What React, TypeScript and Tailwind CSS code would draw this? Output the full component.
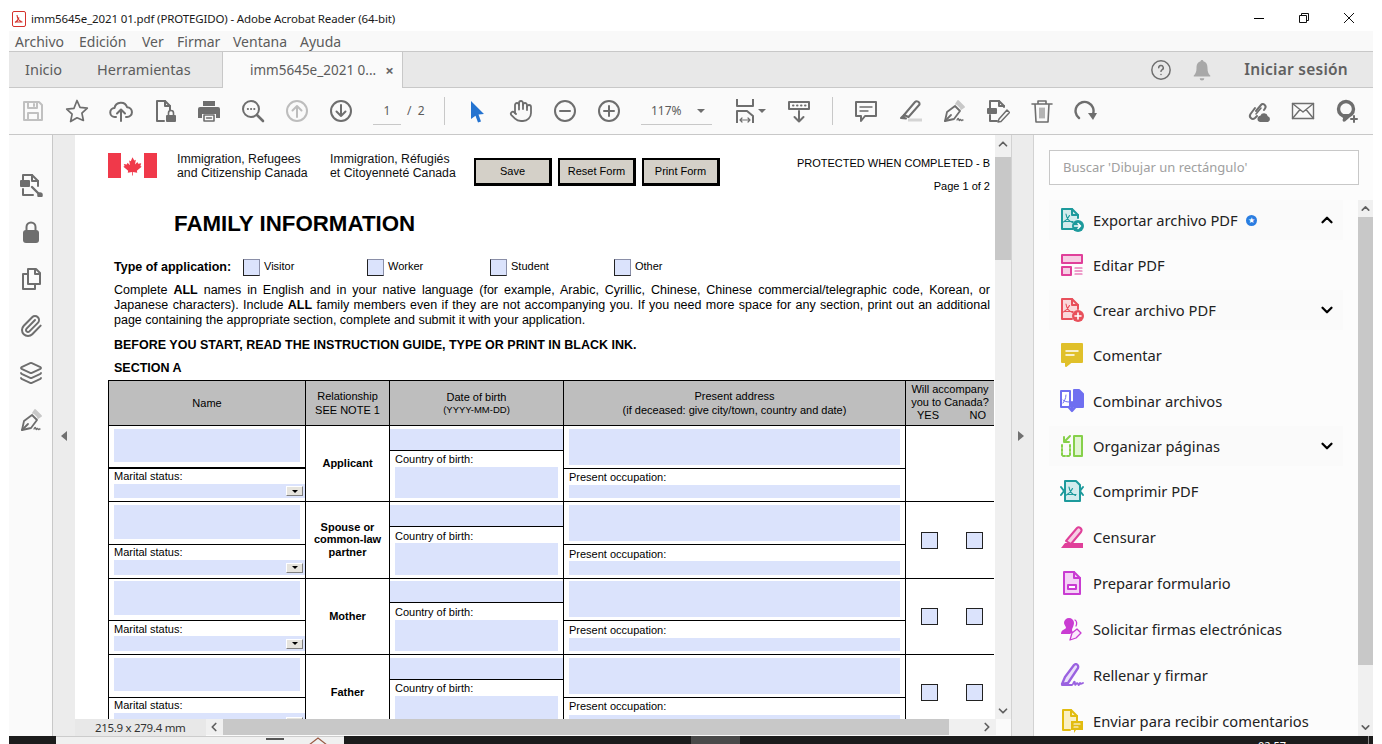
import type { ReactNode } from "react";
import { ChevronDown, ChevronLeft, ChevronRight, ChevronUp, Hand, Layers, Paperclip } from "lucide-react";

function Ic({ children, className = "w-6 h-6 text-[#6e6e6e]", sw = 2 }: { children: ReactNode; className?: string; sw?: number }) {
  return (
    <svg viewBox="0 0 24 24" fill="none" stroke="currentColor" strokeWidth={sw} strokeLinecap="round" strokeLinejoin="round" className={className}>
      {children}
    </svg>
  );
}

const swoosh = "M9 8c.5 4 2.500 7 6.500 8.500M6.500 16c2.500-1.500 5-4 6-6.500M7 15.500h9";

const toolbarLeft: ReactNode[] = [
  <Ic className="w-6 h-6 text-[#c0c0c0]"><path d="M3 3h15l3 3v15H3z" /><path d="M7 3v6h9V3M13 5v2M7 21v-7h10v7" /></Ic>,
  <Ic sw={1.7}><path d="M12 1.500l3 6.800 7.300.8-5.400 5 1.500 7.400L12 18.800l-6.400 3.700 1.500-7.400-5.400-5 7.300-.8z" /></Ic>,
  <Ic><path d="M7 18H6a4.500 4.500 0 0 1-.5-9 6.500 6.500 0 0 1 12.600-.8A4.800 4.800 0 0 1 18 18h-1" /><path d="M12 22V11M8 14.500l4-4 4 4" /></Ic>,
  <Ic>
    <path d="M11 22H4V2h8l5 5v4" />
    <path d="M12 2v5h5" />
    <rect x="13" y="16" width="10" height="7" rx="1" fill="currentColor" stroke="none" />
    <path d="M15.500 16v-2a2.500 2.500 0 0 1 5 0v2" strokeWidth={1.6} />
  </Ic>,
  <Ic>
    <path fill="currentColor" stroke="none" d="M6 2h12v5H6zM3 8h18a2 2 0 0 1 2 2v9h-4v-4H5v4H1v-9a2 2 0 0 1 2-2z" />
    <path d="M7 16h10v6H7z" strokeWidth={1.6} />
    <path d="M9.500 19h5" strokeWidth={1.4} />
  </Ic>,
  <Ic>
    <circle cx="10" cy="10" r="8" />
    <path d="M16 16l6 6" strokeWidth={2.6} />
    <path d="M6.800 10h.2M10 10h.2M13.200 10h.2" />
  </Ic>,
  <Ic className="w-6 h-6 text-[#bdbdbd]"><circle cx="12" cy="12" r="10" /><path d="M12 18V7M7.500 11.500 12 7l4.500 4.500" /></Ic>,
  <Ic><circle cx="12" cy="12" r="10" /><path d="M12 6v11M7.500 12.500 12 17l4.500-4.500" /></Ic>,
];

const toolbarEdit: ReactNode[] = [
  <Ic><path d="M2 3h20v14H11l-4 5v-5H2z" /><path d="M6 8h12M6 12h8" strokeWidth={1.4} /></Ic>,
  <Ic>
    <path d="M6 16 17 3c1.500-1.500 5-.5 4.500 2.500L10.500 18z" />
    <path d="M6 16l-3 3 5 .5" fill="currentColor" />
    <path d="M10 21h14" stroke="#d4d4d4" strokeWidth={3} strokeLinecap="butt" />
  </Ic>,
  <Ic sw={1.8}>
    <path d="M3 22l2-9 8-6 5 5-6 8z" />
    <path d="M3 22l6-6" />
    <path d="M14 5l2-3 6 6-3 2" fill="#c8c8c8" stroke="#c8c8c8" />
    <path d="M15 21c1-2 1.500-2 2 0s1-2 2 0 1-1 2 0" strokeWidth={1.3} />
  </Ic>,
  <Ic>
    <path d="M4 9V2h9l5 5v1" />
    <path d="M13 2v5h5" />
    <path d="M4 16v6h7" />
    <rect x="1" y="9" width="10" height="6" rx="1" fill="currentColor" stroke="none" />
    <path d="M13 20l8-9 2.500 2.500-8.500 9-3 .5z" strokeWidth={1.5} />
  </Ic>,
  <Ic sw={1.6}>
    <path d="M2 5h20M8 5V2h8v3M5 5l1 18h12l1-18" />
    <path d="M10 9v10M12 9v10M14 9v10" strokeWidth={1} />
  </Ic>,
  <Ic>
    <path d="M5 19A9 9 0 1 1 19 15" strokeWidth={2.400} />
    <path d="M14 14h9l-4 7z" fill="currentColor" stroke="none" />
  </Ic>,
];

const railIcons: ReactNode[] = [
  <Ic>
    <path d="M4 8V2h9l6 6v5" />
    <path d="M13 2v6h6" />
    <path d="M4 16v6h10" />
    <rect x="1" y="7" width="10" height="7" rx="1" fill="currentColor" stroke="none" />
    <path d="M13 14l7 7" strokeWidth={2.400} />
    <circle cx="21" cy="22" r="1.800" fill="currentColor" />
  </Ic>,
  <Ic>
    <path d="M7.500 11V7a4.500 4.500 0 0 1 9 0v4" strokeWidth={2} />
    <rect x="4" y="10" width="16" height="13" rx="3" fill="currentColor" stroke="none" />
  </Ic>,
  <Ic>
    <path d="M9 17V2h8l4 4v11z" />
    <path d="M16 2v5h5" />
    <path d="M9 7H4v15h12v-5" />
  </Ic>,
  <Paperclip className="w-6 h-6 text-[#6e6e6e]" strokeWidth={2} />,
  <Layers className="w-6 h-6 text-[#6e6e6e]" strokeWidth={1.800} />,
  <Ic sw={1.8}>
    <path d="M3 22l2-9 8-6 5 5-6 8z" />
    <path d="M3 22l6-6" />
    <path d="M14 5l2-3 6 6-3 2" fill="#c8c8c8" stroke="#c8c8c8" />
    <path d="M15 21c1-2 1.500-2 2 0s1-2 2 0 1-1 2 0" strokeWidth={1.3} />
  </Ic>,
];

type Tool = { label: string; icon: ReactNode; h: string; chevron?: "up" | "down"; badge?: boolean };

const tools: Tool[] = [
  {
    label: "Exportar archivo PDF",
    h: "h-[45px]",
    chevron: "up",
    badge: true,
    icon: (
      <Ic className="w-6 h-6 text-[#1d9a9c]">
        <path d="M13 21H2V1h10l6 6v3" fill="#d3eced" />
        <path d="M12 1v6h6" />
        <path d={swoosh} strokeWidth={1.1} transform="translate(-3 -2)" />
        <circle cx="18" cy="18" r="6" fill="currentColor" stroke="none" />
        <path d="M14.500 18h6M18 15.500l2.500 2.500-2.500 2.500" stroke="#fff" strokeWidth={1.5} />
      </Ic>
    ),
  },
  {
    label: "Editar PDF",
    h: "h-[45px]",
    icon: (
      <Ic className="w-6 h-6 text-[#e0409a]">
        <path d="M2 2h20v8H2z" fill="#f6cfe4" />
        <path d="M2 14h9v8H2z" fill="#f6cfe4" />
        <path d="M15 15h7M15 18h7M15 21h7" strokeWidth={1.200} />
      </Ic>
    ),
  },
  {
    label: "Crear archivo PDF",
    h: "h-[45px]",
    chevron: "down",
    icon: (
      <Ic className="w-6 h-6 text-[#e8505b]">
        <path d="M12 21H2V1h10l6 6v4" fill="#fad9db" />
        <path d="M12 1v6h6" />
        <path d={swoosh} strokeWidth={1.1} transform="translate(-3 -2)" />
        <circle cx="18" cy="18" r="6" fill="currentColor" stroke="none" />
        <path d="M18 15v6M15 18h6" stroke="#fff" strokeWidth={1.6} />
      </Ic>
    ),
  },
  {
    label: "Comentar",
    h: "h-[46px]",
    icon: (
      <Ic className="w-6 h-6 text-[#e0c02a]">
        <path d="M2 1h20v18H11l-5 4v-4H2z" fill="currentColor" />
        <path d="M6 8h12M6 12h8" stroke="#fff" strokeWidth={1.500} />
      </Ic>
    ),
  },
  {
    label: "Combinar archivos",
    h: "h-[45px]",
    icon: (
      <Ic className="w-6 h-6 text-[#6f6ff0]">
        <path d="M1 2h9l0 16H1z" fill="#fff" />
        <path d="M14 1h5l4 4v13h-9z" fill="currentColor" />
        <path d="M3 14c1-2 3-4 3-8M3 11c1 1 3 2 6 2" strokeWidth={1} />
        <path d="M12 13v8M8.500 18l3.500 4 3.500-4" strokeWidth={2.200} />
      </Ic>
    ),
  },
  {
    label: "Organizar páginas",
    h: "h-[45px]",
    chevron: "down",
    icon: (
      <Ic className="w-6 h-6 text-[#86d04a]">
        <path d="M14 2h8v20h-8z" fill="#e2f5d3" />
        <path d="M2 11v11h8V11" strokeDasharray="2 2" />
        <path d="M10 2 4 8M4 3v5h5" />
      </Ic>
    ),
  },
  {
    label: "Comprimir PDF",
    h: "h-[46px]",
    icon: (
      <Ic className="w-6 h-6 text-[#1d9a9c]">
        <path d="M5 2h11l4 4v16H5z" fill="#d3eced" />
        <path d="M1 8l3 4-3 4M23 8l-3 4 3 4" fill="#fff" />
        <path d={swoosh} strokeWidth={1.200} />
      </Ic>
    ),
  },
  {
    label: "Censurar",
    h: "h-[46px]",
    icon: (
      <Ic className="w-6 h-6 text-[#e0409a]">
        <path d="M6 16 17 3c2-2 6 1 4 4L11 19z" fill="#f6cfe4" />
        <path d="M1 23l4-5h18v5z" fill="currentColor" stroke="none" />
      </Ic>
    ),
  },
  {
    label: "Preparar formulario",
    h: "h-[46px]",
    icon: (
      <Ic className="w-6 h-6 text-[#c93cd2]">
        <path d="M4 1h10l6 6v16H4z" fill="#f4d3f6" />
        <path d="M14 1v6h6" />
        <path d="M8 14h8v4H8z" fill="#fff" />
      </Ic>
    ),
  },
  {
    label: "Solicitar firmas electrónicas",
    h: "h-[46px]",
    icon: (
      <Ic className="w-6 h-6 text-[#c93cd2]">
        <path fill="currentColor" stroke="none" d="M9 1a5 5 0 0 1 5 5c0 3-2 5-2 7 0 1 1 2 1 2l-3 2H1c0-4 3-4 5-6 0-2-2-3-2-5a5 5 0 0 1 5-5z" />
        <path d="M10 23l2-7 5-4 4 4-5 5z" strokeWidth={1.300} fill="#fbeafc" />
        <path d="M15 3c2 1 2 4 1 6" strokeWidth={1.300} />
      </Ic>
    ),
  },
  {
    label: "Rellenar y firmar",
    h: "h-[46px]",
    icon: (
      <Ic className="w-6 h-6 text-[#9a62e0]" sw={2.300}>
        <path d="M2 21 5 14 14 2c2-2 5 0 4 3L8 20z" fill="#eadffa" />
        <path d="M2 22h10M13 21c1-3 2-3 2 0s2-3 3 0 2-2 2-1 1 1 3 0" strokeWidth={1.800} />
      </Ic>
    ),
  },
  {
    label: "Enviar para recibir comentarios",
    h: "h-[46px]",
    icon: (
      <Ic className="w-6 h-6 text-[#e2bc10]">
        <path d="M10 21H3V1h8l6 6v5" fill="#faf0c4" />
        <path d="M11 1v6h6" />
        <path d="M11 12h12v9h-7l-2 3v-3h-3z" fill="currentColor" stroke="none" />
        <path d="M14 15h6M14 18h4" stroke="#fff" strokeWidth={1.200} />
      </Ic>
    ),
  },
];

type RowData = {
  label: string[];
  h: string;
  pt: string;
  nameTop: string;
  nameField: string;
  nameLine: string;
  maritalPt: string;
  nameLow: string;
  dobTop: string;
  dobLabel: string;
  dobField: string;
  addrTop: string;
  addrLabel: string;
  addrField: string;
  labelPt: string;
  boxes: string | null;
};

const rows: RowData[] = [
  { label: ["Applicant"], h: "h-[76px]", pt: "pt-[3px]", nameTop: "h-[43px]", nameField: "h-[33px]", nameLine: "border-b-2", maritalPt: "pt-[1px]", nameLow: "h-[14px]", dobTop: "h-[25px]", dobLabel: "h-[16px]", dobField: "h-[31px]", addrTop: "h-[43px]", addrLabel: "h-[16px]", addrField: "h-[13px]", labelPt: "pt-[2px]", boxes: null },
  { label: ["Spouse or", "common-law", "partner"], h: "h-[77px]", pt: "pt-[3px]", nameTop: "h-[43px]", nameField: "h-[34px]", nameLine: "border-b", maritalPt: "pt-[1px]", nameLow: "h-[15px]", dobTop: "h-[25px]", dobLabel: "h-[16px]", dobField: "h-[32px]", addrTop: "h-[43px]", addrLabel: "h-[16px]", addrField: "h-[14px]", labelPt: "pt-[3px]", boxes: "pt-[30px]" },
  { label: ["Mother"], h: "h-[76px]", pt: "pt-[2px]", nameTop: "h-[42px]", nameField: "h-[34px]", nameLine: "border-b", maritalPt: "pt-[2px]", nameLow: "h-[15px]", dobTop: "h-[24px]", dobLabel: "h-[17px]", dobField: "h-[31px]", addrTop: "h-[42px]", addrLabel: "h-[17px]", addrField: "h-[13px]", labelPt: "pt-[3px]", boxes: "pt-[29px]" },
  { label: ["Father"], h: "h-[76px]", pt: "pt-[3px]", nameTop: "h-[43px]", nameField: "h-[33px]", nameLine: "border-b", maritalPt: "pt-[1px]", nameLow: "h-[18px]", dobTop: "h-[25px]", dobLabel: "h-[16px]", dobField: "h-[30px]", addrTop: "h-[43px]", addrLabel: "h-[17px]", addrField: "h-[16px]", labelPt: "pt-[2px]", boxes: "pt-[29px]" },
];

function Box() {
  return <div className="w-[17px] h-[17px] bg-[#dbe3fc] border border-[#222]" />;
}

function TableRow({ row }: { row: RowData }) {
  return (
    <div className={`grid grid-cols-[197px_84px_174px_342px_88px] border-b border-black text-[11px] leading-[12px] text-black ${row.h}`}>
      <div className="border-r border-black flex flex-col">
        <div className={`${row.nameTop} ${row.pt} ${row.nameLine} border-black pl-[5px]`}>
          <div className={`w-[186px] bg-[#dbe3fc] ${row.nameField}`} />
        </div>
        <div className={`h-[15px] pl-[5px] ${row.maritalPt}`}>Marital status:</div>
        <div className={`ml-[5px] bg-[#dbe3fc] flex justify-end items-center pr-[2px] ${row.nameLow}`}>
          <div className="w-[17px] h-[10px] bg-[#e6e4de] border-t border-l border-white border-r border-r-[#808080] border-b border-b-[#808080] flex items-center justify-center">
            <div className="w-0 h-0 border-x-[3px] border-x-transparent border-t-[3px] border-t-black" />
          </div>
        </div>
      </div>
      <div className="border-r border-black flex flex-col items-center justify-center font-bold leading-[12.500px] pb-[1px]">
        {row.label.map((l) => (
          <span key={l}>{l}</span>
        ))}
      </div>
      <div className="border-r border-black flex flex-col">
        <div className={`${row.dobTop} ${row.pt} border-b border-black`}>
          <div className="h-full bg-[#dbe3fc]" />
        </div>
        <div className={`${row.dobLabel} pl-[5px] ${row.labelPt}`}>Country of birth:</div>
        <div className={`ml-[5px] w-[163px] bg-[#dbe3fc] ${row.dobField}`} />
      </div>
      <div className="border-r border-black flex flex-col">
        <div className={`${row.addrTop} ${row.pt} border-b border-black pl-[5px]`}>
          <div className="w-[331px] h-[36px] bg-[#dbe3fc]" />
        </div>
        <div className={`${row.addrLabel} pl-[5px] ${row.labelPt}`}>Present occupation:</div>
        <div className={`ml-[5px] w-[331px] bg-[#dbe3fc] ${row.addrField}`} />
      </div>
      <div className={row.boxes ? `flex gap-[28px] pl-[15px] ${row.boxes}` : ""}>
        {row.boxes && (
          <>
            <Box />
            <Box />
          </>
        )}
      </div>
    </div>
  );
}

function FormButton({ label }: { label: string }) {
  return (
    <div className="w-[78px] h-[28px] bg-[#d4d0c8] border-2 border-r-[3px] border-b-[3px] border-black flex items-center justify-center text-[11px] text-black">
      {label}
    </div>
  );
}

function TypeOption({ label, w }: { label: string; w: string }) {
  return (
    <div className={`flex items-center gap-[4px] ${w}`}>
      <div className="w-[17px] h-[17px] bg-[#dbe3fc] border border-[#8a8fa8] border-l-[#222] border-b-[#222]" />
      <span className="text-[11px] leading-[12px] -mt-[3px]">{label}</span>
    </div>
  );
}

function PdfPage() {
  return (
    <div className="w-[920px] h-[584px] bg-white overflow-hidden pl-[33px] pt-[17px] font-['Liberation_Sans',Arial,sans-serif] text-black">
      <div className="flex h-[40px] pr-[5px]">
        <div className="w-[49px] h-[25px] mt-[1px] flex justify-between bg-white">
          <div className="w-[13px] bg-[#f0394a]" />
          <svg viewBox="0 0 24 24" className="w-[19px] h-[22px] mt-[2px] text-[#f0394a]" fill="currentColor">
            <path d="M12 1l2.200 4 2-1-1 6 3-3 1 2 3.800-.5-1 3.500 1.500 1-6 5 .5 2.500-5.500-.8V24h-1v-4.300l-5.500.8.500-2.500-6-5 1.500-1L1 9.500 4.800 10l1-2 3 3-1-6 2 1z" />
          </svg>
          <div className="w-[13px] bg-[#f0394a]" />
        </div>
        <div className="ml-[20px] w-[153px] text-[12.300px] leading-[14px] text-[#111]">
          <div>Immigration, Refugees</div>
          <div>and Citizenship Canada</div>
        </div>
        <div className="w-[144px] text-[12.300px] leading-[14px] text-[#111]">
          <div>Immigration, Réfugiés</div>
          <div>et Citoyenneté Canada</div>
        </div>
        <div className="flex gap-[6px] mt-[6px]">
          <FormButton label="Save" />
          <FormButton label="Reset Form" />
          <FormButton label="Print Form" />
        </div>
        <div className="ml-auto flex flex-col items-end text-[11px] leading-[12px] pt-[5px] gap-[11px]">
          <span>PROTECTED WHEN COMPLETED - B</span>
          <span>Page 1 of 2</span>
        </div>
      </div>
      <h1 className="mt-[18px] ml-[66px] h-[28px] text-[22.300px] leading-[28px] font-bold">FAMILY INFORMATION</h1>
      <div className="mt-[21px] ml-[6px] flex items-center h-[17px]">
        <span className="w-[129px] text-[12.500px] font-bold">Type of application:</span>
        <TypeOption label="Visitor" w="w-[124px]" />
        <TypeOption label="Worker" w="w-[123px]" />
        <TypeOption label="Student" w="w-[124px]" />
        <TypeOption label="Other" w="w-[100px]" />
      </div>
      <div className="mt-[7px] ml-[6px] w-[876px] text-[12.500px] leading-[15px]">
        <p className="text-justify [text-align-last:justify] whitespace-nowrap">
          Complete <b>ALL</b> names in English and in your native language (for example, Arabic, Cyrillic, Chinese, Chinese commercial/telegraphic code, Korean, or
        </p>
        <p className="text-justify [text-align-last:justify] whitespace-nowrap">
          Japanese characters). Include <b>ALL</b> family members even if they are not accompanying you. If you need more space for any section, print out an additional
        </p>
        <p>page containing the appropriate section, complete and submit it with your application.</p>
      </div>
      <p className="mt-[10px] ml-[6px] h-[15px] text-[12.500px] leading-[15px] font-bold">BEFORE YOU START, READ THE INSTRUCTION GUIDE, TYPE OR PRINT IN BLACK INK.</p>
      <p className="mt-[8px] ml-[6px] h-[15px] text-[12.500px] leading-[15px] font-bold">SECTION A</p>
      <div className="mt-[4px] w-[886px] border-t border-l border-black">
        <div className="grid grid-cols-[197px_84px_174px_342px_88px] h-[45px] border-b border-black bg-[#bebebe] text-[11px] leading-[14px] text-center">
          <div className="border-r border-black flex items-center justify-center pb-[1px]">Name</div>
          <div className="border-r border-black flex flex-col items-center justify-center pb-[1px]">
            <span>Relationship</span>
            <span>SEE NOTE 1</span>
          </div>
          <div className="border-r border-black flex flex-col items-center justify-center">
            <span>Date of birth</span>
            <span className="text-[9.500px] leading-[12px]">(YYYY-MM-DD)</span>
          </div>
          <div className="border-r border-black flex flex-col items-center justify-center pb-[1px]">
            <span>Present address</span>
            <span>(if deceased: give city/town, country and date)</span>
          </div>
          <div className="flex flex-col items-center leading-[13px] pt-[2px] whitespace-nowrap">
            <span>Will accompany</span>
            <span>you to Canada?</span>
            <div className="flex w-full justify-between pl-[11px] pr-[8px]">
              <span>YES</span>
              <span>NO</span>
            </div>
          </div>
        </div>
        {rows.map((row) => (
          <TableRow key={row.label[0]} row={row} />
        ))}
      </div>
    </div>
  );
}

const menu = [
  { label: "Archivo", w: "w-[64px]" },
  { label: "Edición", w: "w-[63px]" },
  { label: "Ver", w: "w-[35px]" },
  { label: "Firmar", w: "w-[56px]" },
  { label: "Ventana", w: "w-[67px]" },
  { label: "Ayuda", w: "w-[50px]" },
];

export default function App() {
  return (
    <div className="w-[1382px] h-[744px] overflow-hidden bg-white px-[9px] flex flex-col font-['Noto_Sans',sans-serif]">
      {/* title bar */}
      <div className="h-[31px] flex items-center pl-[3px] bg-white">
        <svg viewBox="0 0 14 16" className="w-[14px] h-[16px] mt-[7px]" fill="none">
          <rect x="0.500" y="0.500" width="13" height="15" rx="1.500" fill="#fff" stroke="#d4322c" />
          <path d="M5 4c.3 3 1.500 5.500 4.500 6.500M3 11.500c1.500-1 3.500-3 4-5M3 11h7.500" stroke="#d4322c" strokeWidth="1.100" />
        </svg>
        <span className="ml-[5px] mt-[7px] text-[11.500px] tracking-[-0.14px] text-[#1a1a1a] whitespace-nowrap">imm5645e_2021 01.pdf (PROTEGIDO) - Adobe Acrobat Reader (64-bit)</span>
        <div className="ml-auto mt-[5px] flex items-center gap-[35px] pr-[19px] text-[#111]">
          <div className="w-[10px] h-px bg-black" />
          <svg viewBox="0 0 10 10" className="w-[10px] h-[10px]" fill="none" stroke="currentColor">
            <path d="M.5 2.500h7v7h-7zM2.500 2.500v-2h7v7h-2" />
          </svg>
          <svg viewBox="0 0 10 10" className="w-[10px] h-[10px]" fill="none" stroke="currentColor">
            <path d="M0 0l10 10M10 0L0 10" />
          </svg>
        </div>
      </div>

      {/* menu */}
      <div className="h-[21px] bg-[#f9f9f9] border-b border-[#c8c8c8] flex items-center pl-[6px] text-[14px] text-[#5c5c5c]">
        {menu.map((m) => (
          <span key={m.label} className={m.w}>
            {m.label}
          </span>
        ))}
      </div>

      {/* tabs */}
      <div className="h-[36px] bg-[#e8e8e8] border-b border-[#c8c8c8] flex text-[14.500px] text-[#5c5c5c]">
        <div className="w-[213px] flex items-center pl-[16px] gap-[35px]">
          <span>Inicio</span>
          <span>Herramientas</span>
        </div>
        <div className="w-[181px] h-[36px] bg-[#fafafa] border-x border-[#c8c8c8] flex items-center pl-[27px] text-[13.500px]">
          <span>imm5645e_2021 0...</span>
          <span className="ml-[9px] text-[15px] font-bold text-[#666]">×</span>
        </div>
        <div className="ml-auto flex items-center pr-[25px]">
          <Ic className="w-[22px] h-[22px] text-[#6e6e6e]" sw={1.600}>
            <circle cx="12" cy="12" r="10" />
            <path d="M9.500 9.500a2.500 2.500 0 1 1 3.500 2.300c-.7.400-1 .8-1 1.700M12 17h.01" />
          </Ic>
          <svg viewBox="0 0 24 24" className="w-[22px] h-[22px] ml-[19px] text-[#a8a8a8]" fill="currentColor">
            <path d="M12 1c1 0 1.500.7 1.500 1.500C17 3.500 18 6.500 18 10c0 4 1 6 3 8v1H3v-1c2-2 3-4 3-8 0-3.500 1-6.500 4.500-7.500C10.500 1.700 11 1 12 1zM9.500 21h5a2.500 2.500 0 0 1-5 0z" />
          </svg>
          <span className="ml-[31px] text-[15.500px] tracking-[0.25px] font-semibold text-[#606060]">Iniciar sesión</span>
        </div>
      </div>

      {/* toolbar */}
      <div className="h-[47px] bg-[#fafafa] border-b border-[#c8c8c8] flex items-center pl-[2px] text-[#5c5c5c]">
        {toolbarLeft.map((icon, i) => (
          <div key={i} className="w-[44px] flex justify-center">
            {icon}
          </div>
        ))}
        <div className="ml-[10px] w-[28px] h-[28px] border-b border-[#c8c8c8] flex items-center justify-center text-[12px]">1</div>
        <span className="ml-[6px] text-[12px] w-[27px]">/ &nbsp;2</span>
        <div className="ml-[10px] h-[28px] w-px bg-[#c8c8c8]" />
        <div className="ml-[10px] w-[44px] flex justify-center">
          <svg viewBox="0 0 24 24" className="w-6 h-6" fill="#2473d0">
            <path d="M6 2l13 13-5.500.5 2.500 7-3 1-2.500-6.800L6 20z" />
          </svg>
        </div>
        <div className="w-[44px] flex justify-center">
          <Hand className="w-6 h-6 text-[#6e6e6e]" strokeWidth={1.800} />
        </div>
        <div className="w-[44px] flex justify-center">
          <Ic><circle cx="12" cy="12" r="10" /><path d="M7 12h10" /></Ic>
        </div>
        <div className="w-[44px] flex justify-center">
          <Ic><circle cx="12" cy="12" r="10" /><path d="M7 12h10M12 7v10" /></Ic>
        </div>
        <div className="ml-[10px] w-[71px] h-[28px] border-b border-[#c8c8c8] flex items-center pl-[10px] text-[12px]">
          <span>117%</span>
          <div className="ml-auto mr-[7px] w-0 h-0 border-x-[4px] border-x-transparent border-t-[4px] border-t-[#6e6e6e]" />
        </div>
        <div className="ml-[21px] flex items-center">
          <Ic>
            <path d="M4 0v7h16V0" />
            <path d="M4 24V12h10l6 5v7" />
            <path d="M7 21h10M7 21l2-2M7 21l2 2M17 21l-2-2M17 21l-2 2" strokeWidth={1.200} />
          </Ic>
          <div className="ml-[1px] w-0 h-0 border-x-[4px] border-x-transparent border-t-[4px] border-t-[#6e6e6e]" />
        </div>
        <div className="ml-[21px] w-[24px] flex justify-center">
          <Ic>
            <path d="M2 3h20v7H2z" />
            <path d="M6 6.500h.5M10 6.500h.5M14 6.500h.5M18 6.500h.5" />
            <path d="M12 12v10M7.500 18l4.500 4.500 4.500-4.500" />
          </Ic>
        </div>
        <div className="ml-[21px] h-[28px] w-px bg-[#c8c8c8]" />
        <div className="ml-[11px] flex">
          {toolbarEdit.map((icon, i) => (
            <div key={i} className="w-[44px] flex justify-center">
              {icon}
            </div>
          ))}
        </div>
        <div className="ml-auto flex pr-[4px]">
          <div className="w-[44px] flex justify-center">
            <Ic>
              <path d="M9 12l5-6c2-2.500 6 .5 4 3.500l-1 1.500" />
              <path d="M8 9l-4.500 6c-2 3 1.500 6.500 4.500 4l2-2" />
              <path d="M14 9l-5 6" strokeWidth={1.600} />
              <path fill="currentColor" stroke="none" d="M13 23a3.200 3.200 0 0 1 .3-6.300 4 4 0 0 1 7.500.6A3 3 0 0 1 21 23z" />
            </Ic>
          </div>
          <div className="w-[44px] flex justify-center">
            <Ic sw={1.400}>
              <path d="M1.500 4.500h21v15h-21z" />
              <path d="M1.500 4.500 12 13l10.500-8.500M1.500 19.500 9 10.500M22.500 19.500 15 10.500" />
            </Ic>
          </div>
          <div className="w-[44px] flex justify-center">
            <Ic>
              <circle cx="11" cy="10" r="7.500" strokeWidth={3.400} />
              <path fill="currentColor" stroke="none" d="M8 15h6v4l-4 3.500c-2 .5-3-.5-2-3z" />
              <path d="M19 17v6M16 20h6" />
            </Ic>
          </div>
        </div>
      </div>

      {/* main */}
      <div className="h-[601px] flex">
        <div className="w-[44px] bg-[#fafafa] border-r border-[#c8c8c8] flex flex-col items-center pt-[26px]">
          {railIcons.map((icon, i) => (
            <div key={i} className="h-[47px] flex items-center justify-center">
              {icon}
            </div>
          ))}
        </div>
        <div className="w-[22px] bg-[#ececec] flex items-center pl-[8px]">
          <div className="w-0 h-0 border-y-[5px] border-y-transparent border-r-[6px] border-r-[#707070]" />
        </div>
        <div className="w-[936px] flex flex-col">
          <div className="h-[584px] flex">
            <PdfPage />
            <div className="w-[16px] bg-[#f0f0f0] flex flex-col items-center">
              <ChevronUp className="w-[14px] h-[14px] mt-[2px] mb-[6px] text-[#606060]" strokeWidth={3} />
              <div className="w-full h-[103px] bg-[#c8c8c8]" />
              <ChevronDown className="w-[14px] h-[14px] mt-auto mb-[1px] text-[#606060]" strokeWidth={3} />
            </div>
          </div>
          <div className="h-[17px] flex bg-[#fafafa]">
            <div className="w-[131px] bg-[#e8e8e8] pl-[20px] text-[11.500px] tracking-[-0.3px] leading-[17px] text-[#333] whitespace-nowrap">215.9 x 279.4 mm</div>
            <div className="w-[790px] h-[16px] bg-[#f0f0f0] flex items-center">
              <ChevronLeft className="w-[14px] h-[14px] ml-[1px] text-[#606060]" strokeWidth={3} />
              <div className="ml-[2px] w-[726px] h-full bg-[#c8c8c8]" />
              <ChevronRight className="ml-auto mr-[2px] w-[14px] h-[14px] text-[#606060]" strokeWidth={3} />
            </div>
          </div>
        </div>
        <div className="w-[23px] bg-[#ececec] border-x border-[#d2d2d2] flex items-center pl-[6px]">
          <div className="w-0 h-0 border-y-[5px] border-y-transparent border-l-[6px] border-l-[#707070]" />
        </div>
        <div className="w-[339px] bg-[#fcfcfc] flex flex-col">
          <div className="mt-[15px] ml-[15px] w-[310px] h-[35px] bg-white border border-[#c8c8c8] flex items-center pl-[13px] text-[13px] text-[#a0a0a0] shrink-0">
            <span className="mt-[1px]">Buscar 'Dibujar un rectángulo'</span>
          </div>
          <div className="mt-[15px] flex-1 flex min-h-0">
            <div className="w-[324px] pl-[15px] pr-[15px] overflow-hidden">
              {tools.map((t) => (
                <div key={t.label} className={t.h}>
                  <div className={`h-[40px] flex items-center pl-[11px] pr-[7px] ${t.chevron ? "bg-[#fafafa]" : ""}`}>
                    {t.icon}
                    <span className="ml-[9px] mt-[1px] text-[14.700px] text-[#222] whitespace-nowrap">{t.label}</span>
                    {t.badge && (
                      <span className="ml-[8px] w-[11px] h-[11px] rounded-full bg-[#2a7de1] flex items-center justify-center text-[8px] leading-none text-white">★</span>
                    )}
                    {t.chevron === "up" && <ChevronUp className="ml-auto w-[18px] h-[18px] text-black" strokeWidth={3} />}
                    {t.chevron === "down" && <ChevronDown className="ml-auto w-[18px] h-[18px] text-black" strokeWidth={3} />}
                  </div>
                </div>
              ))}
            </div>
            <div className="w-[15px] bg-[#f0f0f0] flex flex-col items-center">
              <ChevronUp className="w-[13px] h-[13px] mt-[2px] text-[#606060]" strokeWidth={3} />
              <div className="mt-[2px] w-full h-[448px] bg-[#c8c8c8]" />
              <ChevronDown className="mt-auto mb-[2px] w-[13px] h-[13px] text-[#606060]" strokeWidth={3} />
            </div>
          </div>
        </div>
      </div>

      {/* taskbar, only its top edge is in the picture */}
      <div className="h-[8px] bg-[#1c1c1c] flex overflow-hidden">
        <div className="ml-[47px] w-[288px] h-full bg-[#f0f0f0] border-t border-[#cccccc] flex items-start pl-[210px]">
          <div className="w-[18px] h-[2px] mt-[1px] bg-[#555]" />
          <svg viewBox="0 0 20 8" className="ml-[24px] w-[20px] h-[8px]" fill="none" stroke="#9a5a44" strokeWidth="1.200">
            <path d="M1 8 10 1l9 7" />
          </svg>
        </div>
        <div className="ml-[347px] w-[49px] h-full bg-[#4a4a4a]" />
        <span className="ml-[518px] mt-[3px] text-[11px] leading-[14px] text-white">02:57</span>
        <div className="ml-auto mr-[4px] w-px h-full bg-[#888]" />
      </div>
    </div>
  );
}
